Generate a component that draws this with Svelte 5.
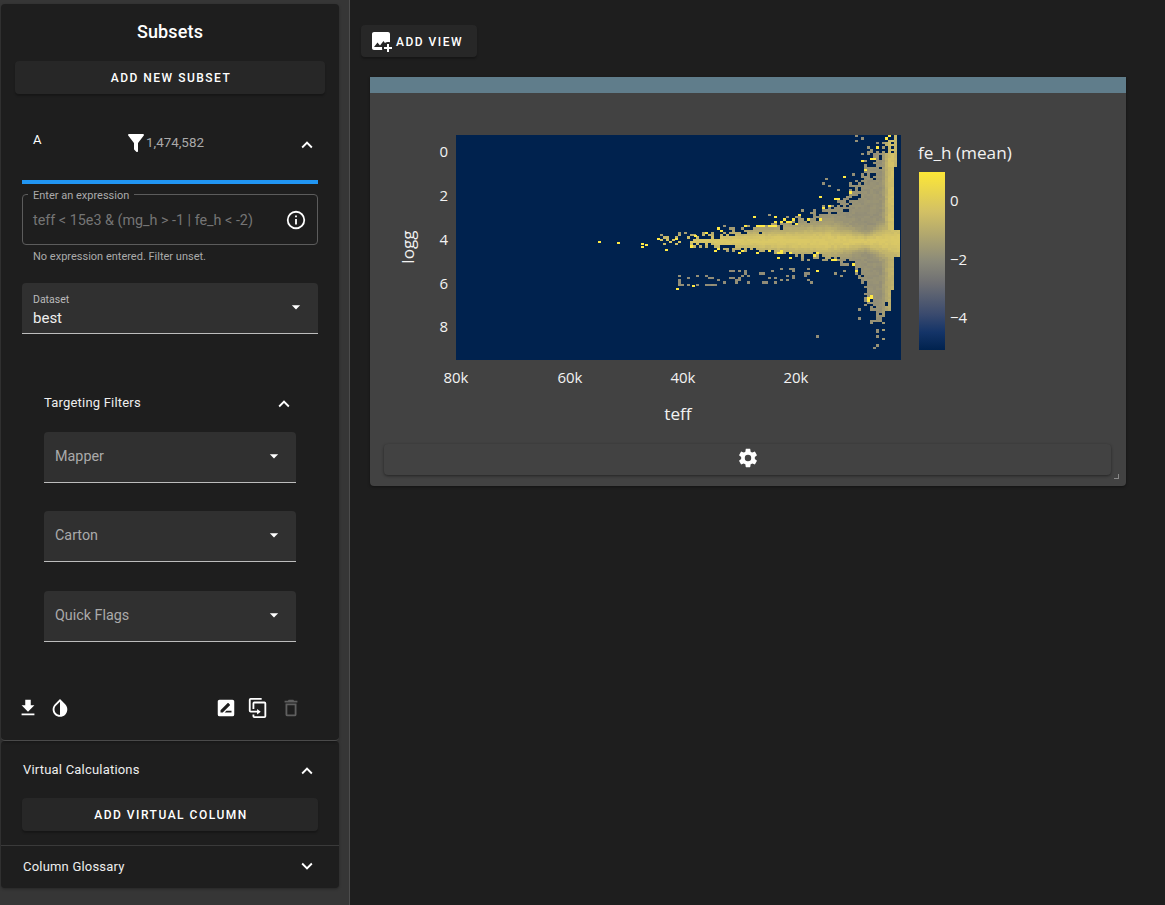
<script>
	const icons = {
		up: 'M7.41,15.41L12,10.83L16.59,15.41L18,14L12,8L6,14L7.41,15.41Z',
		down: 'M7.41,8.58L12,13.17L16.59,8.58L18,10L12,16L6,10L7.41,8.58Z',
		caret: 'M7,10L12,15L17,10H7Z',
		filter: 'M14,12V19.88C14.04,20.18 13.94,20.5 13.71,20.71C13.32,21.1 12.69,21.1 12.3,20.71L10.29,18.7C10.06,18.47 9.96,18.16 10,17.87V12H9.97L4.21,4.62C3.87,4.19 3.95,3.56 4.38,3.22C4.57,3.08 4.78,3 5,3V3H19V3C19.22,3 19.43,3.08 19.62,3.22C20.05,3.56 20.13,4.19 19.79,4.62L14.03,12H14Z',
		info: 'M11,9H13V7H11M12,20C7.59,20 4,16.41 4,12C4,7.59 7.59,4 12,4C16.41,4 20,7.59 20,12C20,16.41 16.41,20 12,20M12,2A10,10 0 0,0 2,12A10,10 0 0,0 12,22A10,10 0 0,0 22,12A10,10 0 0,0 12,2M11,17H13V11H11V17Z',
		download: 'M5,20H19V18H5M19,9H15V3H9V9H5L12,16L19,9Z',
		invert: 'M12,19.58V19.58C10.4,19.58 8.89,18.96 7.76,17.83C6.62,16.69 6,15.19 6,13.58C6,12 6.62,10.47 7.76,9.34L12,5.1M17.66,7.93L12,2.27V2.27L6.34,7.93C3.22,11.05 3.22,16.12 6.34,19.24C7.9,20.8 9.95,21.58 12,21.58C14.05,21.58 16.1,20.8 17.66,19.24C20.78,16.12 20.78,11.05 17.66,7.93Z',
		rename: 'M18,17H10.5L12.5,15H18M6,17V14.5L13.88,6.65C14.07,6.45 14.39,6.45 14.59,6.65L16.35,8.41C16.55,8.61 16.55,8.92 16.35,9.12L8.47,17M19,3H5C3.89,3 3,3.89 3,5V19A2,2 0 0,0 5,21H19A2,2 0 0,0 21,19V5C21,3.89 20.1,3 19,3Z',
		duplicate: 'M11,17H4A2,2 0 0,1 2,15V3A2,2 0 0,1 4,1H16V3H4V15H11V13L15,16L11,19V17M19,21V7H8V13H6V7A2,2 0 0,1 8,5H19A2,2 0 0,1 21,7V21A2,2 0 0,1 19,23H8A2,2 0 0,1 6,21V19H8V21H19Z',
		trash: 'M6,19A2,2 0 0,0 8,21H16A2,2 0 0,0 18,19V7H6V19M8,9H16V19H8V9M15.5,4L14.5,3H9.5L8.5,4H5V6H19V4H15.5Z',
		cog: 'M12,15.5A3.5,3.5 0 0,1 8.5,12A3.5,3.5 0 0,1 12,8.5A3.5,3.5 0 0,1 15.5,12A3.5,3.5 0 0,1 12,15.5M19.43,12.97C19.47,12.65 19.5,12.33 19.5,12C19.5,11.67 19.47,11.34 19.43,11L21.54,9.37C21.73,9.22 21.78,8.95 21.66,8.73L19.66,5.27C19.54,5.05 19.27,4.96 19.05,5.05L16.56,6.05C16.04,5.66 15.5,5.32 14.87,5.07L14.5,2.42C14.46,2.18 14.25,2 14,2H10C9.75,2 9.54,2.18 9.5,2.42L9.13,5.07C8.5,5.32 7.96,5.66 7.44,6.05L4.95,5.05C4.73,4.96 4.46,5.05 4.34,5.27L2.34,8.73C2.21,8.95 2.27,9.22 2.46,9.37L4.57,11C4.53,11.34 4.5,11.67 4.5,12C4.5,12.33 4.53,12.65 4.57,12.97L2.46,14.63C2.27,14.78 2.21,15.05 2.34,15.27L4.34,18.73C4.46,18.95 4.73,19.03 4.95,18.95L7.44,17.94C7.96,18.34 8.5,18.68 9.13,18.93L9.5,21.58C9.54,21.82 9.75,22 10,22H14C14.25,22 14.46,21.82 14.5,21.58L14.87,18.93C15.5,18.67 16.04,18.34 16.56,17.94L19.05,18.95C19.27,19.03 19.54,18.95 19.66,18.73L21.66,15.27C21.78,15.05 21.73,14.78 21.54,14.63L19.43,12.97Z',
		imagePlus: 'M18 15V18H15V20H18V23H20V20H23V18H20V15H18M13.3 21H5C3.9 21 3 20.1 3 19V5C3 3.9 3.9 3 5 3H19C20.1 3 21 3.9 21 5V13.3C20.4 13.1 19.7 13 19 13C17.9 13 16.8 13.3 15.9 13.9L14.5 12L11 16.5L8.5 13.5L5 18H13.1C13 18.3 13 18.7 13 19C13 19.7 13.1 20.4 13.3 21Z'
	};

	const filters = [
		{ label: 'Mapper', gap: 0 },
		{ label: 'Carton', gap: 28 },
		{ label: 'Quick Flags', gap: 29 }
	];

	// small seeded generator so the scatter is the same on every load
	let seed = 4127;
	function rnd() {
		seed = (seed * 16807) % 2147483647;
		return seed / 2147483647;
	}

	function interp(table, d) {
		for (let i = 1; i < table.length; i++) {
			if (d <= table[i][0]) {
				const [a, av] = table[i - 1];
				const [b, bv] = table[i];
				return av + ((bv - av) * (d - a)) / (b - a);
			}
		}
		return table[table.length - 1][1];
	}

	function smooth(a, b, x) {
		const t = Math.min(1, Math.max(0, (x - a) / (b - a)));
		return t * t * (3 - 2 * t);
	}

	const upper = [[0, 150], [10, 135], [16, 112], [24, 92], [44, 56], [70, 32], [124, 20], [190, 11], [240, 6], [320, 2]];
	const lower = [[0, 90], [10, 98], [24, 86], [32, 56], [44, 30], [70, 18], [124, 14], [190, 8], [240, 5], [320, 2]];

	function rightEdge(y) {
		if (y < 165) return 896;
		if (y < 228) return 891;
		if (y < 256) return 898;
		if (y < 290) return 892;
		if (y < 310) return 888;
		return 884;
	}

	const gray = [143, 139, 120];
	const tan = [218, 200, 102];

	function mixed(w) {
		const k = Math.min(1, Math.max(0, w + (rnd() - 0.5) * 0.12));
		const ch = (i) => Math.round(gray[i] + (tan[i] - gray[i]) * k);
		return `rgb(${ch(0)},${ch(1)},${ch(2)})`;
	}

	// how far a cell leans from gray to tan, by where it sits in the wedge
	function tanWeight(x, y) {
		const dy = y - 240;
		const reach = x < 830 ? 8 + (x - 700) * 0.06 : 15 - (x - 830) * 0.22;
		let w = 0.1 + 0.9 * Math.exp(-(dy * dy) / (reach * reach));
		if (x > 860) {
			// the X shape where the ridge meets the vertical band
			const arm = 5 + (x - 860) * 0.55;
			w = Math.max(w, Math.exp(-(dy * dy) / (arm * arm)));
		}
		if (dy < 0) w = Math.max(w, 0.85 * smooth(878, 889, x) * (x > 891 ? 0.85 : 1));
		else w = Math.max(w, 0.62 * smooth(876, 890, x));
		return w;
	}

	function buildCells() {
		const cells = [];
		for (let i = 0; i < 148; i++) {
			const x = 456 + 3 * i;
			const d = 897 - x;
			const wobble = 0.88 + rnd() * 0.26;
			for (let r = 0; r < 100; r++) {
				const y = 135 + 2.25 * r;
				if (x > rightEdge(y) || x < 658) continue;
				const dy = y - 240;
				const spread = (dy < 0 ? interp(upper, d) : interp(lower, d)) * wobble;
				const t = Math.abs(dy) / spread;
				let p = t < 0.65 ? 1 : t < 1.15 ? (1.15 - t) / 0.5 : t < 1.9 ? 0.035 : 0;
				// thin solid core on the left, loose specks around it
				if (x < 770) {
					const core = Math.abs(dy) < (x - 680) * 0.1;
					if (!core) p *= 0.2 + 0.5 * smooth(660, 770, x);
				}
				if (rnd() < p) {
					const bright = t > 0.75 && rnd() < (x < 790 ? 0.55 : 0.12);
					cells.push({ x, y, c: bright ? '#ffe945' : mixed(tanWeight(x, y)) });
					continue;
				}
				// lower branch of gray points under the main ridge
				const branch = Math.abs(y - (278 - (x - 680) * 0.035));
				if (x > 675 && x < 810 && branch < 7 && rnd() < 0.2) {
					cells.push({ x, y, c: mixed(0.04) });
				} else if (x > 800 && x < 880 && y > 262 && y < 336 && rnd() < 0.012) {
					cells.push({ x, y, c: mixed(0.04) });
				}
			}
		}
		for (const [x, y] of [[598, 241], [617, 242], [641, 243], [641, 246], [645, 244], [657, 238], [665, 249], [675, 238], [694, 235], [676, 288], [692, 285]]) {
			cells.push({ x, y, c: '#ffe945' });
		}
		return cells;
	}

	const cells = buildCells();
	const xTicks = [['80k', 456], ['60k', 570], ['40k', 683], ['20k', 796]];
	const yTicks = [['0', 157], ['2', 201], ['4', 245], ['6', 289], ['8', 332]];
	const barTicks = [['0', 206], ['−2', 265], ['−4', 323]];
</script>

{#snippet icon(path, size, cls = '')}
	<svg class={cls} width={size} height={size} viewBox="0 0 24 24"><path d={path} fill="currentColor" /></svg>
{/snippet}

<div class="page">
	<aside class="drawer">
		<section class="panel subsets">
			<h2>Subsets</h2>
			<button class="btn wide">ADD NEW SUBSET</button>

			<div class="inner">
				<div class="subset-head">
					<span class="name">A</span>
					<span class="count">{@render icon(icons.filter, 24)}<span class="num">1,474,582</span></span>
					{@render icon(icons.up, 22, 'chev')}
				</div>
				<div class="blue"></div>

				<div class="outlined">
					<span class="legend">Enter an expression</span>
					<span class="placeholder">teff &lt; 15e3 &amp; (mg_h &gt; -1 | fe_h &lt; -2)</span>
					{@render icon(icons.info, 22, 'info')}
				</div>
				<div class="hint">No expression entered. Filter unset.</div>

				<div class="select dataset">
					<div class="sel-text">
						<span class="small-label">Dataset</span>
						<span class="value">best</span>
					</div>
					{@render icon(icons.caret, 20, 'caret')}
				</div>

				<div class="targeting">
					<div class="t-head">
						<span>Targeting Filters</span>
						{@render icon(icons.up, 22, 'chev')}
					</div>
					{#each filters as f}
						<div class="select filter" style="margin-top: {f.gap}px">
							<span class="f-label">{f.label}</span>
							{@render icon(icons.caret, 20, 'caret')}
						</div>
					{/each}
				</div>
			</div>

			<div class="actions">
				<div class="group left">
					{@render icon(icons.download, 22)}
					{@render icon(icons.invert, 22)}
				</div>
				<div class="group right">
					{@render icon(icons.rename, 22)}
					{@render icon(icons.duplicate, 22)}
					{@render icon(icons.trash, 22, 'off')}
				</div>
			</div>
		</section>

		<section class="panel lower">
			<div class="exp-head">
				<span>Virtual Calculations</span>
				{@render icon(icons.up, 22, 'chev')}
			</div>
			<div class="inner bump"><button class="btn wide2">ADD VIRTUAL COLUMN</button></div>
			<div class="exp-head last">
				<span>Column Glossary</span>
				{@render icon(icons.down, 22, 'chev')}
			</div>
		</section>
	</aside>

	<main class="main">
		<button class="btn add-view">{@render icon(icons.imagePlus, 24)}<span class="av-text">ADD VIEW</span></button>

		<div class="card">
			<div class="card-top"></div>
			<svg class="plot" width="756" height="351" viewBox="370 93 756 351">
				<defs>
					<linearGradient id="cbar" x1="0" y1="0" x2="0" y2="1">
						<stop offset="0" stop-color="#fde737" />
						<stop offset="0.22" stop-color="#d3c164" />
						<stop offset="0.5" stop-color="#8b8a79" />
						<stop offset="0.62" stop-color="#6f7073" />
						<stop offset="0.8" stop-color="#3a4a6e" />
						<stop offset="0.9" stop-color="#143468" />
						<stop offset="1" stop-color="#00224e" />
					</linearGradient>
				</defs>
				<rect x="456" y="135" width="445" height="225" fill="#00224e" />
				<g shape-rendering="crispEdges">
					{#each cells as cell}
						<rect x={cell.x} y={cell.y} width="3" height="2.25" fill={cell.c} />
					{/each}
				</g>
				{#each xTicks as [label, x]}
					<text class="tick" {x} y="383" text-anchor="middle">{label}</text>
				{/each}
				{#each yTicks as [label, y]}
					<text class="tick" x="448" {y} text-anchor="end">{label}</text>
				{/each}
				<text class="axis" x="678" y="420" text-anchor="middle">teff</text>
				<text class="axis" transform="translate(414 247) rotate(-90)" text-anchor="middle">logg</text>
				<text class="axis" x="918" y="159">fe_h (mean)</text>
				<rect x="919" y="172" width="26" height="178" fill="url(#cbar)" />
				{#each barTicks as [label, y]}
					<text class="tick" x="950" {y}>{label}</text>
				{/each}
			</svg>
			<div class="settings">{@render icon(icons.cog, 22)}</div>
			<span class="grip"></span>
		</div>
	</main>
</div>

<style>
	:global(body) {
		margin: 0;
		background: #1e1e1e;
		font-family: Roboto, 'Liberation Sans', sans-serif;
		color: #fff;
	}

	.page {
		display: flex;
		height: 905px;
		overflow: hidden;
	}

	svg {
		display: block;
		flex: none;
	}

	.drawer {
		width: 350px;
		height: 905px;
		flex: none;
		box-sizing: border-box;
		padding: 4px 10px 0 1px;
		background: #363636;
		border-right: 1px solid #4d4d4d;
	}

	.panel {
		background: #1e1e1e;
		border-radius: 4px;
		box-shadow: 0 1px 3px rgba(0, 0, 0, 0.3);
	}

	.subsets {
		height: 737px;
		position: relative;
		box-sizing: border-box;
		border-bottom: 1px solid #4a4a4a;
	}

	h2 {
		margin: 0;
		height: 57px;
		line-height: 55px;
		text-align: center;
		font-size: 18px;
		font-weight: 500;
		letter-spacing: 0.15px;
	}

	.btn {
		display: flex;
		align-items: center;
		justify-content: center;
		border: none;
		border-radius: 4px;
		background: #272727;
		color: #fff;
		font-family: inherit;
		font-size: 12px;
		font-weight: 500;
		letter-spacing: 1.5px;
		box-shadow: 0 2px 2px rgba(0, 0, 0, 0.25);
		padding: 0;
	}

	.wide {
		width: 310px;
		height: 33px;
		margin-left: 14px;
		padding-left: 2px;
	}

	.wide2 {
		width: 100%;
		height: 33px;
		padding-left: 2px;
	}

	.inner {
		padding: 0 21px;
	}

	.bump {
		margin-top: 1px;
	}

	.subset-head {
		display: flex;
		align-items: center;
		height: 38px;
		margin-top: 30px;
		position: relative;
	}

	.name {
		font-size: 13px;
		margin-left: 11px;
		margin-top: -7px;
	}

	.count {
		position: absolute;
		left: 102px;
		top: 7px;
		display: flex;
		align-items: center;
		font-size: 13.4px;
		color: #aaa;
	}

	.count svg {
		color: #fff;
	}

	.num {
		margin-left: -2px;
		margin-top: -2px;
	}

	.chev {
		color: #fff;
	}

	.subset-head .chev {
		margin-left: auto;
		position: relative;
		top: 2px;
	}

	.blue {
		height: 4px;
		background: #2196f3;
		margin-top: 18px;
	}

	.outlined {
		position: relative;
		height: 51px;
		box-sizing: border-box;
		margin-top: 10px;
		border: 1px solid #5c5c5c;
		border-radius: 4px;
		display: flex;
		align-items: center;
		padding: 0 10px;
	}

	.legend {
		position: absolute;
		top: -5px;
		left: 5px;
		padding: 0 5px;
		background: #1e1e1e;
		font-size: 11px;
		line-height: 12px;
		color: #aaa;
	}

	.placeholder {
		font-size: 14.35px;
		color: #757575;
		margin-top: 2px;
	}

	.info {
		position: absolute;
		right: 10px;
		top: 14px;
	}

	.hint {
		font-size: 11px;
		color: #aaa;
		margin: 6px 0 0 11px;
		line-height: 12px;
	}

	.select {
		display: flex;
		align-items: center;
		justify-content: space-between;
		box-sizing: border-box;
		height: 51px;
		background: #303030;
		border-bottom: 1px solid #bdbdbd;
		border-radius: 4px 4px 0 0;
		padding: 0 12px 0 11px;
	}

	.dataset {
		margin-top: 20px;
	}

	.sel-text {
		display: flex;
		flex-direction: column;
	}

	.small-label {
		font-size: 10.5px;
		line-height: 12px;
		color: #bbb;
		margin-top: 5px;
	}

	.value {
		font-size: 15px;
		line-height: 20px;
		color: #eee;
		margin-top: 2px;
	}

	.caret {
		color: #fff;
		position: relative;
		top: -1px;
	}

	.targeting {
		padding: 0 22px;
		margin-top: 57px;
	}

	.t-head {
		display: flex;
		align-items: center;
		justify-content: space-between;
		font-size: 13px;
		letter-spacing: 0.2px;
		height: 22px;
		margin-bottom: 19px;
		color: #eee;
	}

	.t-head .chev {
		margin-right: 1px;
		margin-top: 4px;
	}

	.f-label {
		font-size: 14.35px;
		color: #aaa;
		margin-top: -2px;
	}

	.actions {
		position: absolute;
		left: 0;
		right: 0;
		bottom: 21px;
		display: flex;
		justify-content: space-between;
	}

	.group {
		display: flex;
		align-items: center;
		gap: 10.5px;
	}

	.left {
		margin-left: 15.5px;
	}

	.right {
		margin-right: 37.5px;
	}

	.off {
		color: #5f5f5f;
	}

	.lower {
		height: 147px;
		overflow: hidden;
	}

	.exp-head {
		display: flex;
		align-items: center;
		justify-content: space-between;
		height: 56px;
		padding: 0 21px 0 22px;
		font-size: 13px;
		letter-spacing: 0.2px;
		color: #eee;
	}

	.exp-head .chev {
		margin-top: 3px;
	}

	.exp-head.last {
		height: 41px;
		margin-top: 14px;
		border-top: 1px solid #3a3a3a;
	}

	.exp-head.last .chev {
		margin-top: -2px;
	}

	.main {
		flex: 1;
		min-width: 0;
		padding: 25px 0 0 11px;
	}

	.add-view {
		width: 116px;
		height: 32px;
		justify-content: flex-start;
		padding-left: 8px;
		gap: 3px;
	}

	.av-text {
		margin-top: 2px;
	}

	.card {
		position: relative;
		width: 756px;
		height: 409px;
		margin: 20px 0 0 9px;
		background: #424242;
		border-radius: 0 0 4px 4px;
		box-shadow: 0 1px 3px rgba(0, 0, 0, 0.4);
	}

	.card-top {
		height: 16px;
		background: #607d8b;
	}

	.tick {
		font-family: 'Open Sans', sans-serif;
		font-size: 15px;
		fill: #f2f2f2;
	}

	.axis {
		font-family: 'Open Sans', sans-serif;
		font-size: 17.2px;
		fill: #f2f2f2;
	}

	.settings {
		display: flex;
		align-items: center;
		justify-content: center;
		box-sizing: border-box;
		height: 31px;
		padding-bottom: 3px;
		margin: 0 15px 0 14px;
		background: #424242;
		border-radius: 4px;
		box-shadow: 0 1px 3px rgba(0, 0, 0, 0.45);
	}

	.grip {
		position: absolute;
		right: 7px;
		bottom: 7px;
		width: 4px;
		height: 4px;
		border-right: 1px solid #888;
		border-bottom: 1px solid #888;
	}
</style>
